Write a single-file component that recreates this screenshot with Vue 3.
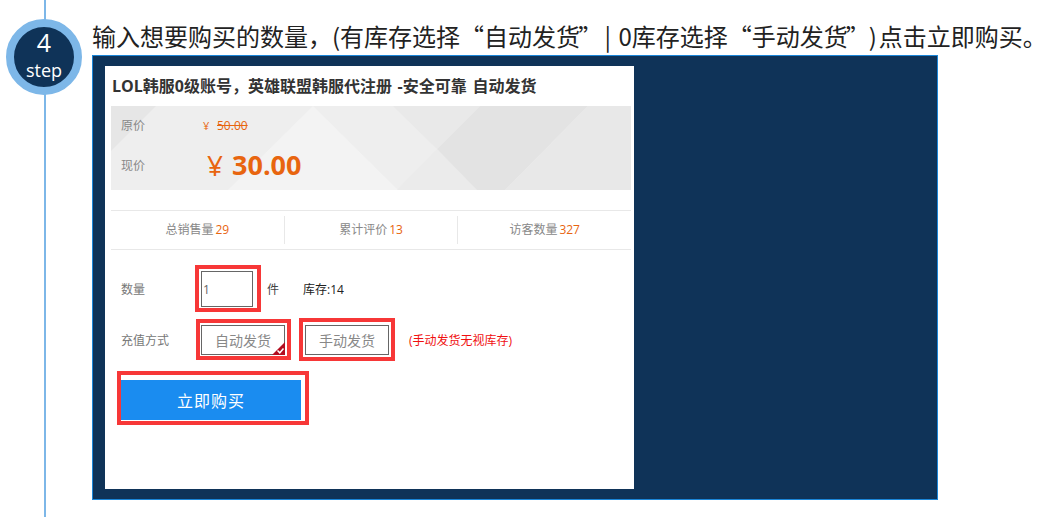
<template>
  <div class="step">
    <div class="step-side">
      <div class="step-badge">
        <span class="step-num">4</span>
        <span class="step-word">step</span>
      </div>
    </div>
    <div class="step-body">
      <h2 class="step-title">输入想要购买的数量，(有库存选择“自动发货<span class="quote-end">”</span> <span class="pipe">|</span> 0库存选择“手动发货<span class="quote-end">”</span><span class="paren">)</span>点击立即购买<span class="stop">。</span></h2>
      <div class="shot">
        <div class="card">
          <div class="goods-name">LOL韩服0级账号，英雄联盟韩服代注册 -安全可靠 自动发货</div>

          <div class="price-box">
            <svg class="price-bg" width="520" height="84" viewBox="0 0 520 84">
              <polygon points="0,0 45,0 0,45" fill="#e6e6e6" />
              <polygon points="117,84 202,0 287,84" fill="#f3f3f3" />
              <polygon points="282,0 326,43 369,0" fill="#e9e9e9" />
              <polygon points="286,84 326,43 366,84" fill="#ebebeb" />
              <polygon points="369,0 477,0 394,84 366,84 326,43" fill="#e3e3e3" />
              <polygon points="477,0 520,0 520,84 394,84" fill="#e8e8e8" />
            </svg>
            <div class="price-row old">
              <span class="price-label">原价</span>
              <span class="old-yen">¥</span>
              <s class="old-num">50.00</s>
            </div>
            <div class="price-row now">
              <span class="price-label">现价</span>
              <span class="now-yen">¥</span>
              <span class="now-num">30.00</span>
            </div>
          </div>

          <div class="stats">
            <div v-for="item in stats" :key="item.label" class="stat">
              {{ item.label }}<em>{{ item.value }}</em>
            </div>
          </div>

          <div class="form">
            <div class="form-row">
              <label class="form-label">数量</label>
              <div class="mark mark-qty">
                <input class="qty-input" type="text" value="1" />
              </div>
              <span class="unit">件</span>
              <span class="stock">库存:14</span>
            </div>
            <div class="form-row pay-row">
              <label class="form-label pay-label">充值方式</label>
              <div class="mark mark-auto">
                <div class="pay-btn">
                  自动发货
                  <svg class="tick" width="13" height="13" viewBox="0 0 13 13">
                    <polygon points="13,0 13,13 0,13" fill="#b30d1f" />
                    <path d="M5.5 8.5 L7.8 10.8 L11.5 6.5" fill="none" stroke="#fff" stroke-width="1.5" />
                  </svg>
                </div>
              </div>
              <div class="mark mark-manual">
                <div class="pay-btn">手动发货</div>
              </div>
              <span class="pay-note">(手动发货无视库存)</span>
            </div>
            <div class="mark mark-buy">
              <button class="buy-btn" type="button">立即购买</button>
            </div>
          </div>
        </div>
      </div>
    </div>
  </div>
</template>

<script setup>
const stats = [
  { label: '总销售量', value: 29 },
  { label: '累计评价', value: 13 },
  { label: '访客数量', value: 327 }
]
</script>

<style scoped>
.step {
  display: flex;
  width: 1038px;
  height: 517px;
  overflow: hidden;
  background: #fff;
  font-family: "Open Sans", "Noto Sans CJK SC", sans-serif;
}

.step-side {
  position: relative;
  flex: none;
  width: 92px;
  padding: 19px 0 0 6px;
  box-sizing: border-box;
}

.step-side::before {
  content: '';
  position: absolute;
  left: 44px;
  top: 0;
  bottom: 0;
  width: 2px;
  background: #7db7e8;
}

.step-badge {
  position: relative;
  display: flex;
  flex-direction: column;
  align-items: center;
  width: 60px;
  height: 60px;
  border: 8px solid #7db7e8;
  border-radius: 50%;
  background: #0f3358;
  color: #fff;
}

.step-num {
  font-size: 25px;
  line-height: 30px;
}

.step-word {
  font-size: 18px;
  line-height: 20px;
  margin-top: 3px;
}

.step-title {
  margin: 0;
  height: 55px;
  font-family: "Noto Sans CJK SC", sans-serif;
  font-size: 24px;
  font-weight: 400;
  line-height: 36px;
  padding-top: 18px;
  box-sizing: border-box;
  color: #222;
  white-space: nowrap;
}

.quote-end {
  margin-left: -2px;
}

.pipe {
  margin: 0 2px 0 -3px;
}

.paren {
  margin: 0 2px 0 11px;
}

.stop {
  letter-spacing: -12px;
}

.shot {
  width: 846px;
  height: 445px;
  padding: 10px 0 0 12px;
  box-sizing: border-box;
  border: 1px solid #1b86d8;
  background: #0f3358;
}

.card {
  width: 529px;
  height: 423px;
  background: #fff;
}

.goods-name {
  height: 40px;
  padding-left: 7px;
  font-size: 16px;
  font-weight: 700;
  line-height: 40px;
  word-spacing: 1.5px;
  color: #333;
  white-space: nowrap;
}

.price-box {
  position: relative;
  width: 520px;
  height: 84px;
  margin-left: 6px;
  background: #eee;
}

.price-bg {
  position: absolute;
  left: 0;
  top: 0;
}

.price-row {
  position: relative;
  display: flex;
  align-items: center;
  padding-left: 10px;
}

.price-row.old {
  height: 38px;
}

.price-row.now {
  height: 41px;
}

.price-label {
  width: 82px;
  font-size: 12px;
  color: #888;
}

.old-yen {
  width: 14px;
  font-size: 11px;
  color: #e8650f;
}

.old-num {
  font-size: 12px;
  color: #e8650f;
}

.now-yen {
  width: 25px;
  margin-left: 4px;
  font-size: 28px;
  color: #e8650f;
}

.now-num {
  font-size: 27px;
  font-weight: 700;
  color: #e8650f;
}

.stats {
  display: flex;
  align-items: center;
  width: 520px;
  height: 38px;
  margin: 20px 0 0 6px;
  border-top: 1px solid #e8e8e8;
  border-bottom: 1px solid #e8e8e8;
}

.stat {
  flex: 1;
  height: 28px;
  line-height: 28px;
  text-align: center;
  font-size: 12px;
  color: #888;
  border-left: 1px solid #e8e8e8;
}

.stat:first-child {
  border-left: 0;
}

.stat em {
  margin-left: 2px;
  font-style: normal;
  color: #e8650f;
}

.form {
  padding: 15px 0 0 16px;
}

.form-row {
  display: flex;
  align-items: center;
}

.form-label {
  flex: none;
  width: 74px;
  font-size: 12px;
  color: #777;
}

.mark {
  flex: none;
  box-sizing: border-box;
  border: 4px solid #f73737;
}

.mark-qty {
  width: 66px;
  height: 47px;
  padding: 2px 0 0 2px;
}

.qty-input {
  display: block;
  width: 52px;
  height: 36px;
  padding: 0 0 0 1px;
  box-sizing: border-box;
  border: 1px solid #666;
  font-family: inherit;
  font-size: 12px;
  color: #666;
  outline: none;
}

.unit {
  margin-left: 6px;
  font-size: 12px;
  color: #444;
}

.stock {
  margin-left: 24px;
  font-size: 12px;
  color: #222;
}

.pay-row {
  margin-top: 6px;
}

.pay-label {
  width: 75px;
}

.mark-auto {
  width: 95px;
  height: 41px;
  padding: 2px 0 0 1px;
}

.mark-manual {
  width: 96px;
  height: 43px;
  margin-left: 8px;
  padding: 3px 0 0 2px;
}

.pay-btn {
  position: relative;
  width: 84px;
  height: 30px;
  box-sizing: border-box;
  border: 1px solid #666;
  font-size: 14px;
  line-height: 30px;
  text-align: center;
  color: #888;
}

.tick {
  position: absolute;
  right: -1px;
  bottom: -1px;
}

.pay-note {
  margin-left: 14px;
  font-size: 12px;
  color: #f01010;
}

.mark-buy {
  width: 192px;
  height: 54px;
  margin: 10px 0 0 -4px;
  padding-top: 5px;
}

.buy-btn {
  display: block;
  width: 180px;
  height: 40px;
  padding: 0;
  border: 0;
  background: #1a8cf0;
  font-family: inherit;
  font-size: 16px;
  letter-spacing: 1px;
  color: #fff;
}
</style>
